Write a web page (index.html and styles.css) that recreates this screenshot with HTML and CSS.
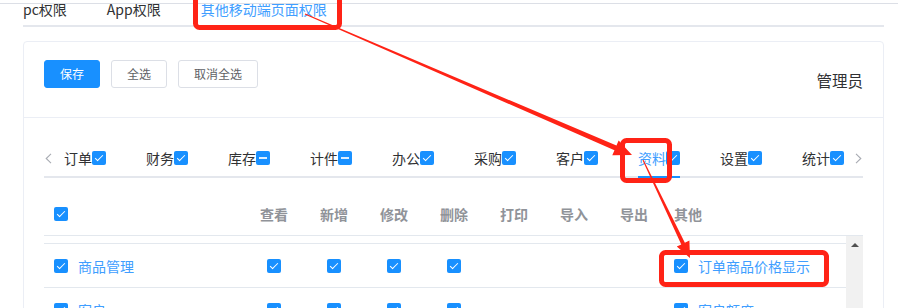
FILE: index.html
```html
<!DOCTYPE html>
<html lang="zh-CN">
<head>
<meta charset="utf-8">
<title>权限设置</title>
<link rel="stylesheet" href="styles.css">
</head>
<body>
<div class="page">
  <div class="toptabs">
    <div class="toptab">pc权限</div>
    <div class="toptab">App权限</div>
    <div class="toptab active">其他移动端页面权限</div>
  </div>

  <div class="card">
    <div class="card-head">
      <div class="btns">
        <button class="btn primary">保存</button>
        <button class="btn">全选</button>
        <button class="btn">取消全选</button>
      </div>
      <div class="role">管理员</div>
    </div>

    <div class="card-body">
      <div class="tabs-nav">
        <span class="nav-arrow left"><svg width="7" height="11" viewBox="0 0 7 11"><path d="M6 0.8 L1.2 5.5 L6 10.2" fill="none" stroke="#a8abb2" stroke-width="1.1"/></svg></span>
        <div class="tabs-scroll">
          <div class="tab"><span>订单</span><i class="cb on"></i></div>
          <div class="tab"><span>财务</span><i class="cb on"></i></div>
          <div class="tab"><span>库存</span><i class="cb half"></i></div>
          <div class="tab"><span>计件</span><i class="cb half"></i></div>
          <div class="tab"><span>办公</span><i class="cb on"></i></div>
          <div class="tab"><span>采购</span><i class="cb on"></i></div>
          <div class="tab"><span>客户</span><i class="cb on"></i></div>
          <div class="tab active"><span>资料</span><i class="cb on"></i></div>
          <div class="tab"><span>设置</span><i class="cb on"></i></div>
          <div class="tab"><span>统计</span><i class="cb on"></i></div>
        </div>
        <span class="nav-arrow right"><svg width="7" height="11" viewBox="0 0 7 11"><path d="M1 0.8 L5.8 5.5 L1 10.2" fill="none" stroke="#a8abb2" stroke-width="1.1"/></svg></span>
      </div>

      <div class="table">
        <div class="thead grid">
          <div class="cell first"><i class="cb on"></i></div>
          <div class="cell th">查看</div>
          <div class="cell th">新增</div>
          <div class="cell th">修改</div>
          <div class="cell th">删除</div>
          <div class="cell th">打印</div>
          <div class="cell th">导入</div>
          <div class="cell th">导出</div>
          <div class="cell th other">其他</div>
        </div>
        <div class="tbody">
          <div class="rows">
            <div class="row grid">
              <div class="cell first"><i class="cb on"></i><span class="name">商品管理</span></div>
              <div class="cell"><i class="cb on"></i></div>
              <div class="cell"><i class="cb on"></i></div>
              <div class="cell"><i class="cb on"></i></div>
              <div class="cell"><i class="cb on"></i></div>
              <div class="cell"></div>
              <div class="cell"></div>
              <div class="cell"></div>
              <div class="cell other"><i class="cb on"></i><span class="name">订单商品价格显示</span></div>
            </div>
            <div class="row grid">
              <div class="cell first"><i class="cb on"></i><span class="name">客户</span></div>
              <div class="cell"><i class="cb on"></i></div>
              <div class="cell"><i class="cb on"></i></div>
              <div class="cell"><i class="cb on"></i></div>
              <div class="cell"><i class="cb on"></i></div>
              <div class="cell"></div>
              <div class="cell"></div>
              <div class="cell"></div>
              <div class="cell other"><i class="cb on"></i><span class="name">客户额度</span></div>
            </div>
          </div>
          <div class="vscroll"><span class="up"></span></div>
        </div>
      </div>
    </div>
  </div>

  <svg class="annot" width="898" height="308" viewBox="0 0 898 308">
    <rect x="195.5" y="-10" width="144" height="37.5" rx="4" fill="none" stroke="#ff2316" stroke-width="5"/>
    <rect x="622.5" y="140.5" width="47" height="40" rx="4" fill="none" stroke="#ff2316" stroke-width="5"/>
    <rect x="661.5" y="252.5" width="165" height="32" rx="4" fill="none" stroke="#ff2316" stroke-width="5"/>
    <polygon fill="#ff2316" points="305.2,13.54 616.46,145.57 618.64,140.52 632,155 612.3,155.22 614.48,150.17 304.8,14.46"/>
    <polygon fill="#ff2316" points="643.45,159.78 684.88,242.71 689.39,240.54 690,258 676.77,246.6 681.28,244.43 642.55,160.22"/>
  </svg>
</div>
</body>
</html>
```

FILE: styles.css
```css
html, body {
  margin: 0;
  padding: 0;
  width: 898px;
  height: 308px;
  overflow: hidden;
  background: #fff;
}

.page {
  position: relative;
  height: 308px;
  padding: 0 14px 0 23px;
  font-family: "Noto Sans CJK SC", "Noto Sans", sans-serif;
  font-size: 14px;
  color: #303133;
}

.page::before {
  content: "";
  position: absolute;
  left: 0;
  right: 0;
  top: 3px;
  height: 1px;
  background: #dcdfe6;
}

/* top tabs */
.toptabs {
  display: flex;
  height: 27px;
  background: linear-gradient(#e4e7ed, #e4e7ed) left bottom / 100% 2px no-repeat;
}

.toptab {
  height: 27px;
  line-height: 18px;
  padding: 0 20px;
  white-space: nowrap;
  color: #303133;
}

.toptab:first-child { padding-left: 0; }

.toptab.active {
  color: #409eff;
  background: linear-gradient(#409eff, #409eff) left bottom / 100% 2px no-repeat;
  background-origin: content-box;
  background-clip: content-box;
}

/* card */
.card {
  margin-top: 14px;
  border: 1px solid #ebeef5;
  border-radius: 4px;
  height: 300px;
}

.card-head {
  display: flex;
  justify-content: space-between;
  align-items: flex-start;
  height: 76px;
  box-sizing: border-box;
  padding: 18px 20px 0;
  border-bottom: 1px solid #ebeef5;
}

.btns {
  display: flex;
  gap: 11px;
}

.btn {
  height: 28px;
  padding: 0 15px;
  border: 1px solid #dcdfe6;
  border-radius: 3px;
  background: #fff;
  color: #606266;
  font-family: inherit;
  font-size: 12px;
  line-height: 26px;
}

.btn.primary {
  background: #1890ff;
  border-color: #1890ff;
  color: #fff;
}

.role {
  margin-top: 9px;
  font-size: 15.5px;
  line-height: 22px;
  color: #303133;
}

.card-body {
  padding: 20px;
}

/* inner tabs */
.tabs-nav {
  display: flex;
  height: 40px;
  background: linear-gradient(#e4e7ed, #e4e7ed) left bottom / 100% 2px no-repeat;
}

.nav-arrow {
  display: flex;
  align-items: center;
  height: 40px;
  flex: none;
}

.nav-arrow.left { width: 20px; padding-left: 1px; box-sizing: border-box; }
.nav-arrow.right { width: 18px; padding-left: 10px; box-sizing: border-box; }

.tabs-scroll {
  flex: 1;
  display: flex;
  overflow: hidden;
}

.tab {
  display: flex;
  align-items: center;
  height: 40px;
  padding: 0 20px;
  flex: none;
  color: #303133;
}

.tab:first-child { padding-left: 0; }
.tab:last-child { padding-right: 0; }

.tab span { line-height: 40px; }

.tab.active {
  color: #409eff;
  background: linear-gradient(#1890ff, #1890ff) left bottom / 100% 2px no-repeat;
  background-origin: content-box;
  background-clip: content-box;
}

/* checkbox */
.cb {
  display: inline-grid;
  place-items: center;
  width: 14px;
  height: 14px;
  flex: none;
  border-radius: 2px;
  background: #1890ff;
}

.cb.on::after {
  content: "";
  width: 3px;
  height: 7px;
  border: solid #fff;
  border-width: 0 1px 1px 0;
  transform: translate(0, -1px) rotate(45deg);
}

.cb.half::after {
  content: "";
  width: 8px;
  height: 2px;
  background: rgba(255, 255, 255, 0.85);
}

/* table */
.table {
  margin-top: 15px;
}

.grid {
  display: grid;
  grid-template-columns: 200px repeat(7, 60px) 1fr;
}

.thead {
  height: 43px;
  box-sizing: border-box;
  border-bottom: 1px solid #e3e8ee;
}

.cell {
  display: flex;
  align-items: center;
  justify-content: center;
  min-width: 0;
}

.cell.first,
.cell.other {
  justify-content: flex-start;
  padding-left: 10px;
  gap: 10px;
  white-space: nowrap;
}

.th {
  color: #909399;
  font-weight: bold;
  font-size: 14px;
}

.tbody {
  display: flex;
  height: 100px;
}

.rows {
  flex: 1;
  margin-top: 7px;
  border-top: 1px solid #e3e8ee;
}

.row {
  height: 44px;
  box-sizing: border-box;
  border-bottom: 1px solid #e3e8ee;
}

.name {
  color: #409eff;
  font-size: 14px;
}

.vscroll {
  width: 17px;
  flex: none;
  background: #f1f1f1;
  display: flex;
  justify-content: center;
  padding-top: 7px;
  box-sizing: border-box;
}

.up {
  width: 0;
  height: 0;
  border-left: 4px solid transparent;
  border-right: 4px solid transparent;
  border-bottom: 4px solid #505050;
}

/* annotations */
.annot {
  position: absolute;
  left: 0;
  top: 0;
  pointer-events: none;
}
```
